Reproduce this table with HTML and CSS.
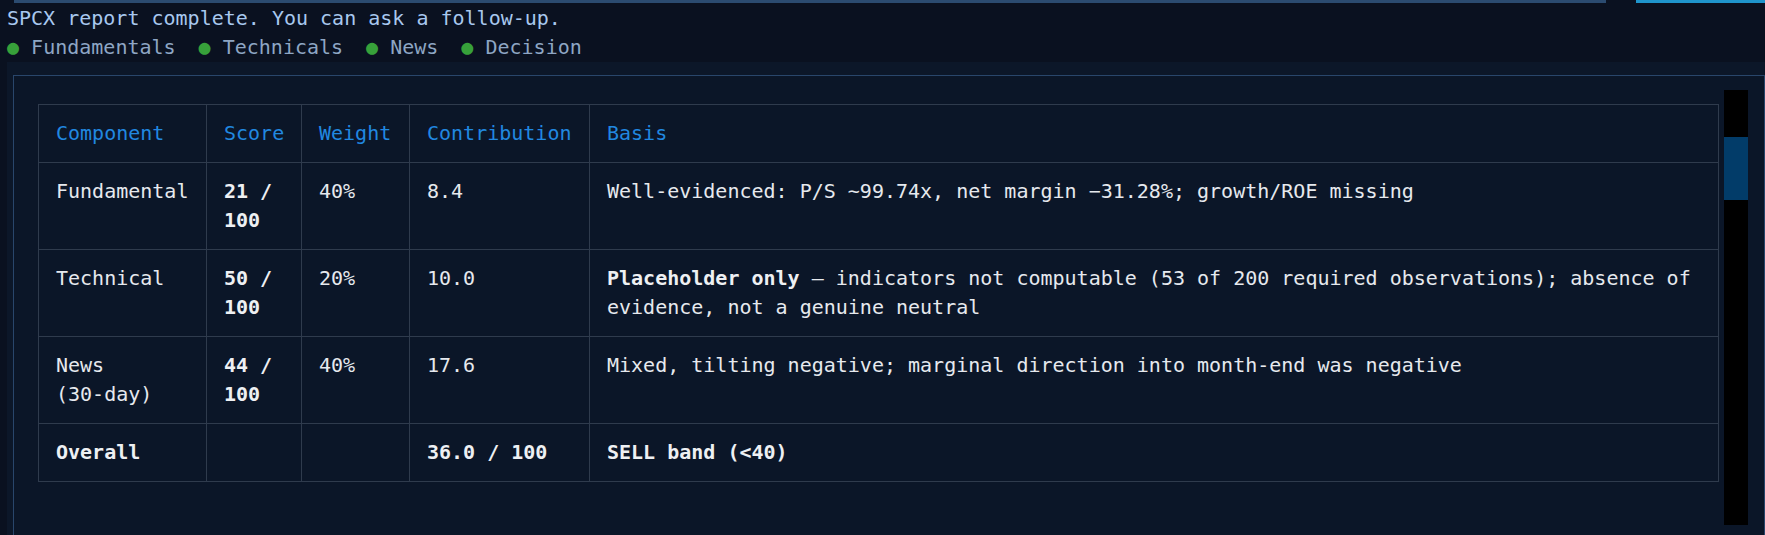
FILE: index.html
```html
<!DOCTYPE html>
<html lang="en">
<head>
  <meta charset="UTF-8">
  <meta name="viewport" content="width=device-width, initial-scale=1.0">
  <title>SPCX Report</title>
  <link rel="stylesheet" href="styles.css">
</head>
<body>
  <div class="topbar">
    <span class="bar-main"></span>
    <span class="bar-accent"></span>
  </div>
  <div class="status">SPCX report complete. You can ask a follow-up.</div>
  <div class="steps">
    <span class="step"><span class="dot">●</span> Fundamentals</span>
    <span class="step"><span class="dot">●</span> Technicals</span>
    <span class="step"><span class="dot">●</span> News</span>
    <span class="step"><span class="dot">●</span> Decision</span>
  </div>

  <div class="output">
    <div class="panel">
      <div class="panel-body">
        <div class="content">
          <table class="score-table">
            <colgroup>
              <col class="col-component">
              <col class="col-score">
              <col class="col-weight">
              <col class="col-contrib">
              <col>
            </colgroup>
            <thead>
              <tr>
                <th>Component</th>
                <th>Score</th>
                <th>Weight</th>
                <th>Contribution</th>
                <th>Basis</th>
              </tr>
            </thead>
            <tbody>
              <tr>
                <td>Fundamental</td>
                <td><strong>21 / 100</strong></td>
                <td>40%</td>
                <td>8.4</td>
                <td>Well-evidenced: P/S ~99.74x, net margin −31.28%; growth/ROE missing</td>
              </tr>
              <tr>
                <td>Technical</td>
                <td><strong>50 / 100</strong></td>
                <td>20%</td>
                <td>10.0</td>
                <td><strong>Placeholder only</strong> — indicators not computable (53 of 200 required observations); absence of evidence, not a genuine neutral</td>
              </tr>
              <tr>
                <td>News <span class="nowrap">(30-day)</span></td>
                <td><strong>44 / 100</strong></td>
                <td>40%</td>
                <td>17.6</td>
                <td>Mixed, tilting negative; marginal direction into month-end was negative</td>
              </tr>
              <tr>
                <td><strong>Overall</strong></td>
                <td></td>
                <td></td>
                <td><strong>36.0 / 100</strong></td>
                <td><strong>SELL band (&lt;40)</strong></td>
              </tr>
            </tbody>
          </table>
        </div>
        <div class="scrollbar">
          <div class="thumb"></div>
        </div>
      </div>
    </div>
  </div>
</body>
</html>
```

FILE: styles.css
```css
body {
  margin: 0;
  padding: 0;
  height: 535px;
  overflow: hidden;
  background: #0a1120;
  font-family: "DejaVu Sans Mono", "Liberation Mono", monospace;
  font-size: 20px;
  line-height: 29px;
  color: #e6e9ee;
}

.topbar {
  display: flex;
  gap: 30px;
  height: 3px;
  padding-left: 14px;
  margin-bottom: 1px;
}

.bar-main {
  flex: 1;
  background: #2b4b70;
}

.bar-accent {
  width: 129px;
  background: #1f95cc;
}

.status {
  padding-left: 7px;
  color: #a8c8ef;
}

.steps {
  display: flex;
  gap: 23px;
  padding-left: 7px;
  color: #8ea6c4;
}

.dot {
  color: #37a13a;
}

.output {
  margin-left: 7px;
  padding: 13px 0 0 6px;
  background: #0c1729;
}

.panel {
  border: 1px solid #29466b;
  border-bottom: none;
  background: #0b1628;
  padding: 14px 0 40px 24px;
}

.panel-body {
  display: flex;
}

.content {
  flex: 1;
  padding: 14px 5px 0 0;
}

.scrollbar {
  width: 24px;
  height: 435px;
  background: #000;
  margin-right: 16px;
}

.thumb {
  margin-top: 47px;
  height: 63px;
  background: #023c69;
}

.score-table {
  width: 100%;
  table-layout: fixed;
  border-collapse: collapse;
  border: 1px solid #2f3b4d;
}

.col-component { width: 168px; }
.col-score { width: 95px; }
.col-weight { width: 108px; }
.col-contrib { width: 180px; }

.score-table th,
.score-table td {
  border: 1px solid #2f3b4d;
  padding: 14px 17px;
  text-align: left;
  vertical-align: top;
}

.score-table th {
  font-weight: normal;
  color: #2188e0;
}

.score-table strong {
  font-weight: bold;
  color: #eef0f3;
}

.nowrap {
  white-space: nowrap;
}
```
